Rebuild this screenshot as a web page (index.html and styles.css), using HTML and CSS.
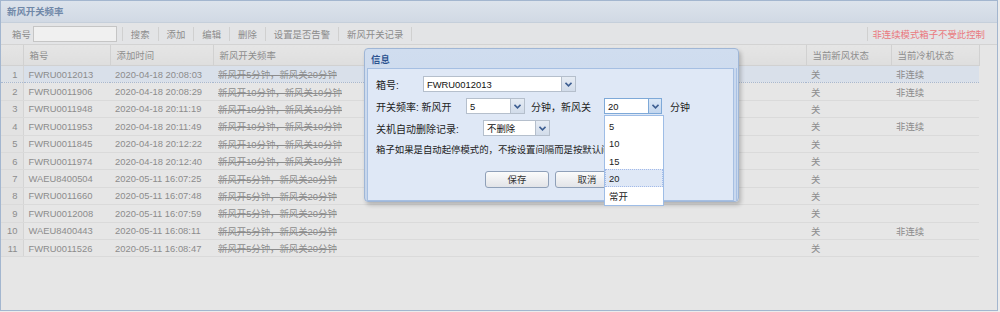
FILE: index.html
```html
<!DOCTYPE html>
<html>
<head>
  <meta charset="utf-8">
  <title>新风开关频率</title>
  <link rel="stylesheet" href="styles.css">
</head>
<body>
  <div class="panel">
    <div class="panel-header">新风开关频率</div>
    <div class="toolbar">
      <span class="tb-label">箱号</span>
      <input class="tb-input" type="text">
      <span class="sep"></span>
      <span class="tb-btn">搜索</span><span class="sep"></span>
      <span class="tb-btn">添加</span><span class="sep"></span>
      <span class="tb-btn">编辑</span><span class="sep"></span>
      <span class="tb-btn">删除</span><span class="sep"></span>
      <span class="tb-btn">设置是否告警</span><span class="sep"></span>
      <span class="tb-btn">新风开关记录</span><span class="sep"></span>
      <span class="spacer"></span>
      <span class="sep"></span>
      <span class="tb-warn">非连续模式箱子不受此控制</span>
    </div>

    <table class="grid">
      <colgroup>
        <col class="c-num"><col class="c-box"><col class="c-time"><col class="c-freq"><col class="c-fan"><col class="c-cool">
      </colgroup>
      <thead>
        <tr><th></th><th>箱号</th><th>添加时间</th><th>新风开关频率</th><th>当前新风状态</th><th>当前冷机状态</th></tr>
      </thead>
      <tbody>
        <tr class="selected"><td class="num">1</td><td>FWRU0012013</td><td>2020-04-18 20:08:03</td><td class="freq">新风开5分钟，新风关20分钟</td><td>关</td><td>非连续</td></tr>
        <tr><td class="num">2</td><td>FWRU0011906</td><td>2020-04-18 20:08:29</td><td class="freq">新风开10分钟，新风关10分钟</td><td>关</td><td>非连续</td></tr>
        <tr><td class="num">3</td><td>FWRU0011948</td><td>2020-04-18 20:11:19</td><td class="freq">新风开10分钟，新风关10分钟</td><td>关</td><td></td></tr>
        <tr><td class="num">4</td><td>FWRU0011953</td><td>2020-04-18 20:11:49</td><td class="freq">新风开10分钟，新风关10分钟</td><td>关</td><td>非连续</td></tr>
        <tr><td class="num">5</td><td>FWRU0011845</td><td>2020-04-18 20:12:22</td><td class="freq">新风开10分钟，新风关10分钟</td><td>关</td><td></td></tr>
        <tr><td class="num">6</td><td>FWRU0011974</td><td>2020-04-18 20:12:40</td><td class="freq">新风开10分钟，新风关10分钟</td><td>关</td><td></td></tr>
        <tr><td class="num">7</td><td>WAEU8400504</td><td>2020-05-11 16:07:25</td><td class="freq">新风开5分钟，新风关20分钟</td><td>关</td><td></td></tr>
        <tr><td class="num">8</td><td>FWRU0011660</td><td>2020-05-11 16:07:48</td><td class="freq">新风开5分钟，新风关20分钟</td><td>关</td><td></td></tr>
        <tr><td class="num">9</td><td>FWRU0012008</td><td>2020-05-11 16:07:59</td><td class="freq">新风开5分钟，新风关20分钟</td><td>关</td><td></td></tr>
        <tr><td class="num">10</td><td>WAEU8400443</td><td>2020-05-11 16:08:11</td><td class="freq">新风开5分钟，新风关20分钟</td><td>关</td><td>非连续</td></tr>
        <tr><td class="num">11</td><td>FWRU0011526</td><td>2020-05-11 16:08:47</td><td class="freq">新风开5分钟，新风关20分钟</td><td>关</td><td></td></tr>
      </tbody>
    </table>
  </div>

  <!-- edit window -->
  <div class="window">
    <div class="win-title">信息</div>
    <div class="win-body">
      <div class="form-row">
        <span class="lbl lbl-box">箱号:</span>
        <span class="combo combo-box"><span class="combo-text">FWRU0012013</span><span class="trigger"><svg width="7" height="5" viewBox="0 0 7 5"><path d="M0.5 0.8 L3.5 3.8 L6.5 0.8" fill="none" stroke="#3e5f92" stroke-width="1.6"/></svg></span></span>
      </div>
      <div class="form-row">
        <span class="lbl lbl-freq">开关频率:&nbsp;新风开</span>
        <span class="combo combo-on"><span class="combo-text">5</span><span class="trigger"><svg width="7" height="5" viewBox="0 0 7 5"><path d="M0.5 0.8 L3.5 3.8 L6.5 0.8" fill="none" stroke="#3e5f92" stroke-width="1.6"/></svg></span></span>
        <span class="lbl lbl-mid">分钟，新风关</span>
        <span class="combo combo-off focus"><span class="combo-text">20</span><span class="trigger"><svg width="7" height="5" viewBox="0 0 7 5"><path d="M0.5 0.8 L3.5 3.8 L6.5 0.8" fill="none" stroke="#3e5f92" stroke-width="1.6"/></svg></span></span>
        <span class="lbl lbl-end">分钟</span>
      </div>
      <div class="form-row">
        <span class="lbl lbl-del">关机自动删除记录:</span>
        <span class="combo combo-del"><span class="combo-text">不删除</span><span class="trigger"><svg width="7" height="5" viewBox="0 0 7 5"><path d="M0.5 0.8 L3.5 3.8 L6.5 0.8" fill="none" stroke="#3e5f92" stroke-width="1.6"/></svg></span></span>
      </div>
      <div class="note">箱子如果是自动起停模式的，不按设置间隔而是按默认间隔控制</div>
      <div class="win-buttons">
        <span class="btn">保存</span>
        <span class="btn">取消</span>
      </div>
    </div>
  </div>

  <ul class="combo-list">
    <li>5</li>
    <li>10</li>
    <li>15</li>
    <li class="hover">20</li>
    <li>常开</li>
  </ul>
</body>
</html>
```

FILE: styles.css
```css
body {
  margin: 0;
  background: #ececec;
  font-family: "Liberation Sans", "Noto Sans CJK SC", sans-serif;
  font-size: 9.4px;
  color: #8c8c8c;
}

.panel {
  width: 996px;
  height: 309px;
  border: 1px solid #a3b6cf;
  background: #e6e6e6;
}

.panel-header {
  height: 21px;
  line-height: 22px;
  padding-left: 6px;
  background: linear-gradient(#dce3ec, #d1d9e4);
  border-bottom: 1px solid #c5cfdb;
  color: #7088a8;
  font-weight: bold;
}

.toolbar {
  display: flex;
  align-items: center;
  height: 21px;
  padding: 0 12px 0 11px;
  background: #e3e4e6;
  border-bottom: 1px solid #d3d3d3;
}

.tb-label {
  margin-right: 2px;
}

.tb-input {
  box-sizing: border-box;
  width: 84px;
  height: 16px;
  margin: 0 5px 0 0;
  padding: 0;
  border: 1px solid #c5c5c5;
  background: #f0f0f0;
}

.sep {
  width: 1px;
  height: 14px;
  background: #d0d0d0;
}

.tb-btn {
  padding: 0 8px;
}

.spacer {
  flex: 1;
}

.tb-warn {
  margin-left: 4px;
  color: #ea7a80;
}

.grid {
  width: 978px;
  table-layout: fixed;
  border-collapse: collapse;
}

.c-num { width: 22px; }
.c-box { width: 87px; }
.c-time { width: 103px; }
.c-freq { width: 593px; }
.c-fan { width: 85px; }
.c-cool { width: 88px; }

.grid th {
  height: 20px;
  padding: 0 6px;
  text-align: left;
  font-weight: normal;
  color: #8e8e8e;
  background: linear-gradient(#e5e5e5, #dedede);
  border-right: 1px solid #d1d1d1;
  border-bottom: 1px solid #d1d1d1;
}

.grid td {
  height: 16.4px;
  padding: 0 5px;
  white-space: nowrap;
  overflow: hidden;
  border-bottom: 1px solid #dadada;
}

.grid td.num {
  padding: 0 5px 0 0;
  text-align: right;
  background: #e2e2e2;
  border-right: 1px solid #d4d4d4;
}

.grid td.freq {
  text-decoration: line-through;
}

.grid tr.selected td {
  background: #d9e0ea;
  border-top: 1px dotted #a8b8d0;
  border-bottom: 1px dotted #a8b8d0;
}

.grid tr.selected td.num {
  background: #dde1e6;
}

/* window over the masked page */
.window {
  position: absolute;
  left: 364px;
  top: 48px;
  width: 373px;
  height: 152px;
  border: 1px solid #9fb6d6;
  border-radius: 4px;
  background: linear-gradient(#d0ddef, #c6d5ea);
  box-shadow: 2px 3px 4px rgba(0, 0, 0, 0.22);
}

.win-title {
  height: 19px;
  line-height: 22px;
  padding-left: 6px;
  font-weight: bold;
  color: #2d5490;
}

.win-body {
  height: 124px;
  margin: 0 4px 0 2px;
  padding: 7px 8px 0;
  background: #dfe8f6;
  border: 1px solid #a6bfe2;
  box-shadow: 2px 0 0 #c9d8ee, 3px 0 0 #a9c1e4;
  color: #222;
}

.form-row {
  display: flex;
  align-items: center;
  height: 16px;
  margin-bottom: 6px;
}

.lbl {
  font-size: 10px;
  white-space: nowrap;
}

.lbl-box { width: 47px; }
.lbl-freq { width: 90px; }
.lbl-mid { width: 73px; margin-left: 6px; }
.lbl-end { margin-left: 8px; }
.lbl-del { width: 107px; }

.combo {
  display: flex;
  height: 16px;
}

.combo-text {
  box-sizing: border-box;
  height: 16px;
  line-height: 15px;
  padding-left: 3px;
  background: #fff;
  border: 1px solid #b5bfcc;
  color: #111;
}

.combo-box .combo-text { width: 139px; }
.combo-on .combo-text { width: 45px; }
.combo-off .combo-text { width: 45px; }
.combo-del .combo-text { width: 53px; }

.trigger {
  box-sizing: border-box;
  width: 14px;
  height: 16px;
  display: flex;
  align-items: center;
  justify-content: center;
  background: linear-gradient(#e6ecf4, #d2dcea);
  border: 1px solid #b5bfcc;
  border-left: none;
}

.combo-off .trigger {
  width: 13px;
}

.focus .combo-text {
  border-color: #7ea9d8;
}

.focus .trigger {
  background: linear-gradient(#dbe8f7, #c3d6ee);
  border-color: #7ea9d8;
}

/* the open dropdown covers the end of this line */
.note {
  width: 228px;
  height: 16px;
  line-height: 16px;
  white-space: nowrap;
  overflow: hidden;
}

.win-buttons {
  display: flex;
  justify-content: center;
  gap: 6px;
  margin-top: 13px;
  padding-left: 3px;
}

.btn {
  box-sizing: border-box;
  width: 64px;
  height: 17px;
  line-height: 15px;
  text-align: center;
  background: linear-gradient(#fbfbfb, #e2e4e8);
  border: 1px solid #8fa0b8;
  border-radius: 3px;
  color: #333;
}

/* open combo dropdown */
.combo-list {
  position: absolute;
  left: 604px;
  top: 115px;
  width: 58px;
  height: 88px;
  margin: 0;
  padding: 1px 0 0;
  list-style: none;
  background: #fff;
  border: 1px solid #9ebde6;
  color: #222;
}

.combo-list li {
  box-sizing: border-box;
  height: 17.4px;
  line-height: 17px;
  padding-left: 3px;
  border: 1px solid transparent;
}

.combo-list li.hover {
  background: #dfe8f6;
  border: 1px dotted #a3bae9;
}
```
